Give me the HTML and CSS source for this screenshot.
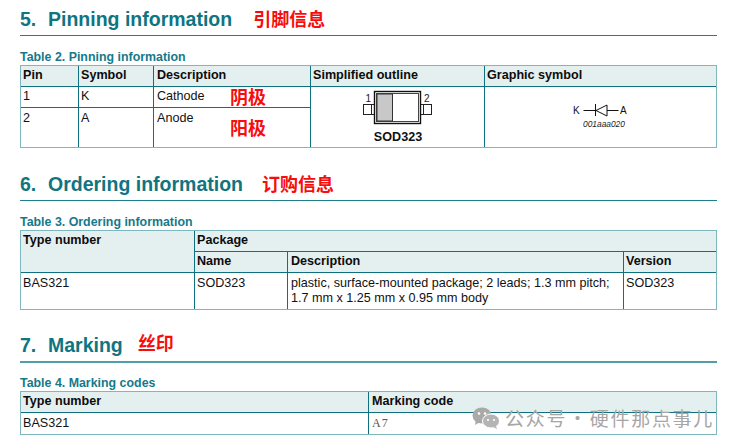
FILE: index.html
```html
<!DOCTYPE html>
<html lang="en">
<head>
<meta charset="utf-8">
<title>BAS321 datasheet</title>
<link rel="stylesheet" href="styles.css">
</head>
<body>
<main class="page">
  <section class="sec sec-5">
    <h2 class="title"><span class="num">5.</span>Pinning information<span class="note note-5">引脚信息</span></h2>
    <div class="caption">Table 2. Pinning information</div>
    <table class="tbl t2">
      <colgroup><col class="c58"><col class="c75"><col class="c157"><col class="c174"><col></colgroup>
      <tr class="r21"><th>Pin</th><th>Symbol</th><th class="pl3">Description</th><th>Simplified outline</th><th>Graphic symbol</th></tr>
      <tr class="r21"><td>1</td><td>K</td><td class="rel pl3">Cathode<span class="note mark m1">阴极</span></td>
        <td rowspan="2" class="fig">
          <svg class="outline" width="173" height="60" viewBox="0 0 173 60">
            <rect x="52.500" y="17.500" width="11" height="10" fill="#fff" stroke="#222"/>
            <path d="M60.500 17.500v10" stroke="#222"/>
            <rect x="109.500" y="17.500" width="11" height="10" fill="#fff" stroke="#222"/>
            <path d="M112.500 17.500v10" stroke="#222"/>
            <rect x="63.500" y="4.500" width="46" height="32" fill="#fff" stroke="#111" stroke-width="1.400"/>
            <rect x="65.500" y="6.500" width="42" height="28" fill="#fff" stroke="#444"/>
            <rect x="66" y="7" width="15.500" height="27" fill="#c8c8c8" stroke="#333"/>
            <text x="54.500" y="15" class="lead">1</text>
            <text x="113" y="15" class="lead">2</text>
            <text x="87" y="54" class="pkg">SOD323</text>
          </svg>
        </td>
        <td rowspan="2" class="fig">
          <svg class="symbol" width="232" height="60" viewBox="0 0 232 60">
            <path d="M98.500 23.500h35M110.500 17v12" stroke="#111" fill="none"/>
            <path d="M111 23.500l11-5.500v11z" fill="#fff" stroke="#111"/>
            <path d="M122 23.500h11" stroke="#111"/>
            <text x="88" y="27" class="sym">K</text>
            <text x="135" y="27" class="sym">A</text>
            <text x="98" y="39.500" class="code">001aaa020</text>
          </svg>
        </td>
      </tr>
      <tr class="r40"><td>2</td><td>A</td><td class="rel pl3">Anode<span class="note mark m2">阳极</span></td></tr>
    </table>
  </section>

  <section class="sec sec-6">
    <h2 class="title"><span class="num">6.</span>Ordering information<span class="note note-6">订购信息</span></h2>
    <div class="caption">Table 3. Ordering information</div>
    <table class="tbl t3">
      <colgroup><col class="c174"><col class="c93"><col class="c336"><col></colgroup>
      <tr class="r21"><th rowspan="2">Type number</th><th colspan="3">Package</th></tr>
      <tr class="r21"><th>Name</th><th class="pl3">Description</th><th>Version</th></tr>
      <tr class="r37"><td>BAS321</td><td>SOD323</td><td class="wrap pl3">plastic, surface-mounted package; 2 leads; 1.3 mm pitch;<br>1.7 mm x 1.25 mm x 0.95 mm body</td><td>SOD323</td></tr>
    </table>
  </section>

  <section class="sec sec-7">
    <h2 class="title"><span class="num">7.</span>Marking<span class="note note-7">丝印</span></h2>
    <div class="caption">Table 4. Marking codes</div>
    <table class="tbl t4">
      <colgroup><col class="c348"><col></colgroup>
      <tr class="r21"><th>Type number</th><th class="pl3">Marking code</th></tr>
      <tr class="r22"><td>BAS321</td><td class="mono pl3">A7</td></tr>
    </table>
  </section>
</main>

<div class="watermark">
  <svg width="28" height="22" viewBox="0 0 28 22">
    <ellipse cx="10" cy="8.500" rx="9.500" ry="8" fill="#a9a9a9"/>
    <path d="M4 13l-1 5 5-3z" fill="#a9a9a9"/>
    <ellipse cx="19" cy="14" rx="8.500" ry="7" fill="#b4b4b4" stroke="#fff"/>
    <path d="M24 19l1 3-4-2z" fill="#b4b4b4"/>
    <circle cx="7" cy="6.500" r="1.300" fill="#fff"/><circle cx="13" cy="6.500" r="1.300" fill="#fff"/>
    <circle cx="16" cy="13" r="1.100" fill="#fff"/><circle cx="22" cy="13" r="1.100" fill="#fff"/>
  </svg>
  <span>公众号<span class="dot">·</span>硬件那点事儿</span>
</div>
</body>
</html>
```
FILE: styles.css
```css
* { box-sizing: border-box; }
html, body { margin: 0; background: #fff; }
body { position: relative; width: 735px; height: 448px; overflow: hidden; font-family: "Liberation Sans", Arial, sans-serif; color: #111; }
.page { padding: 0 18px 0 20px; }
.sec-5 { padding-top: 6px; }
.sec-6 { padding-top: 23px; }
.sec-7 { padding-top: 22px; }
.title { margin: 0; height: 30px; line-height: 24px; font-size: 19.5px; font-weight: 700; color: #107481; border-bottom: 1px solid #1f7f8b; white-space: nowrap; }
.num { display: inline-block; width: 28px; }
.sec-7 .title { height: 31px; border-bottom: 2px solid #4f9ea8; }
.note { font-family: "Noto Sans CJK SC", sans-serif; font-weight: 700; color: #f80d0d; font-size: 18px; line-height: 24px; letter-spacing: 0; }
.note-5 { margin-left: 21px; }
.note-6 { margin-left: 19px; }
.note-7 { margin-left: 15px; position: relative; top: -2px; }
.caption { margin-top: 14px; height: 15px; line-height: 15px; font-size: 12.4px; font-weight: 700; color: #16798a; }
.sec-7 .caption { margin-top: 13px; }
.tbl { width: 697px; table-layout: fixed; border-collapse: collapse; font-size: 12.6px; line-height: 15px; outline: 1px solid #7fb7bf; outline-offset: -1px; }
th, td { border: 1px solid #0f7080; padding: 2px; text-align: left; vertical-align: top; white-space: nowrap; }
th { background: #e4f0f0; font-weight: 700; color: #0c0c0c; }
.pl3 { padding-left: 3px; }
.tbl tr:first-child > * { border-top-color: #7fb7bf; }
.tbl tr:last-child > * { border-bottom-color: #7fb7bf; }
.tbl tr > *:first-child { border-left-color: #5ea4ae; }
.tbl tr > *:last-child { border-right-color: #5ea4ae; }
.c58 { width: 58px; }
.c75 { width: 75px; }
.c157 { width: 157px; }
.c174 { width: 174px; }
.c93 { width: 93px; }
.c336 { width: 336px; }
.c348 { width: 348px; }
.r21 { height: 21px; }
.r22 { height: 22px; }
.r37 { height: 37px; }
.r40 { height: 40px; }
.r40 > td, .r37 > td, .r22 > td { padding-top: 3px; padding-bottom: 1px; }
.wrap { line-height: 15px; }
.rel { position: relative; }
.mark { position: absolute; left: 76px; }
.m1 { top: -3px; }
.m2 { top: 7px; }
.fig { padding: 0; }
.fig svg { display: block; }
.lead { font: 10px "Liberation Sans", sans-serif; fill: #222; }
.pkg { font: 700 12.6px "Liberation Sans", sans-serif; fill: #111; text-anchor: middle; }
.sym { font: 10px "Liberation Sans", sans-serif; fill: #111; }
.code { font: italic 8.400px "Liberation Sans", sans-serif; fill: #222; }
.mono { font-family: "Liberation Serif", "Liberation Mono", monospace; font-size: 12px; letter-spacing: 1px; color: #555; }
.watermark { position: absolute; left: 472px; top: 406px; display: flex; align-items: center; gap: 5px; height: 24px; color: #a6a6a6; font: 19px/24px "Noto Sans CJK SC", sans-serif; letter-spacing: 1.700px; white-space: nowrap; }
.dot { margin: 0 1px; }
```
